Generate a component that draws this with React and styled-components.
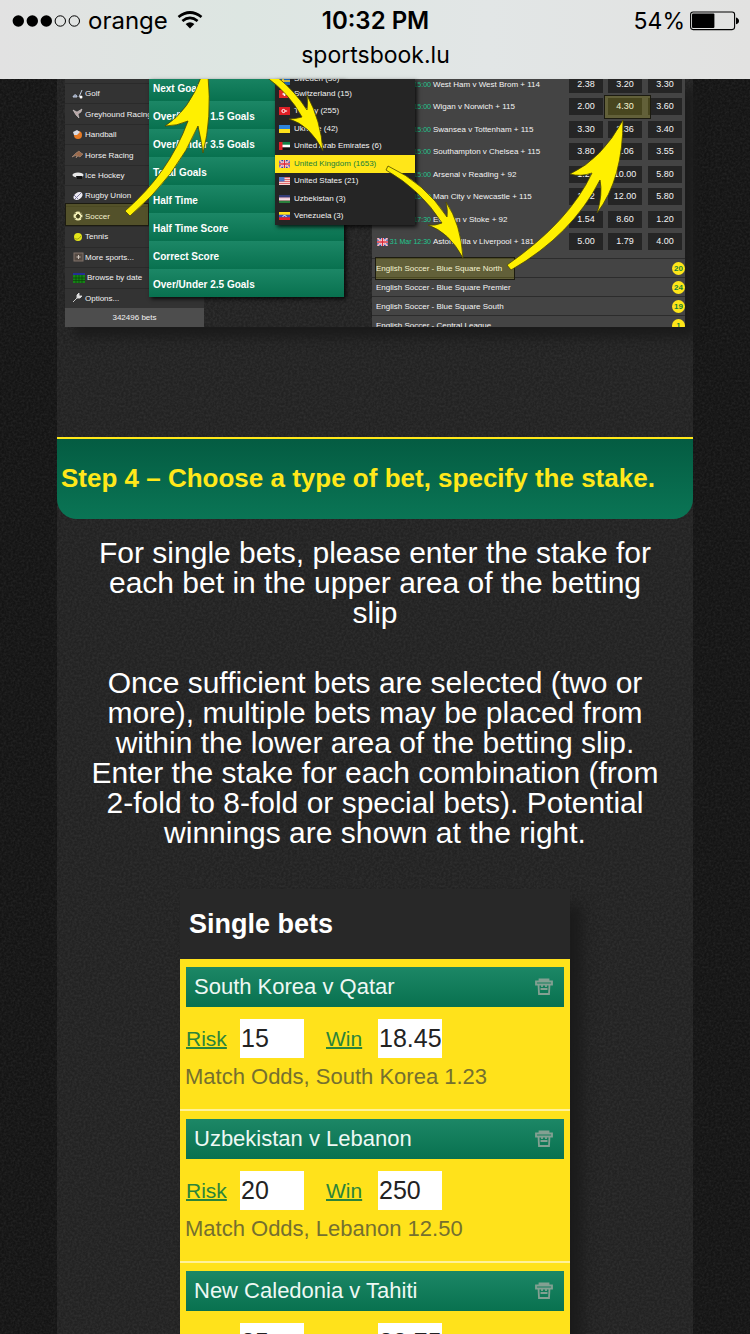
import React from "react";
import styled, { createGlobalStyle } from "styled-components";

const grain = (alpha) =>
  `url("data:image/svg+xml,%3Csvg xmlns='http://www.w3.org/2000/svg' width='160' height='160'%3E%3Cfilter id='n'%3E%3CfeTurbulence type='fractalNoise' baseFrequency='.45' numOctaves='2' stitchTiles='stitch'/%3E%3CfeColorMatrix values='0 0 0 0 0.5 0 0 0 0 0.5 0 0 0 0 0.5 ${alpha} 0 0 0 -.05'/%3E%3C/filter%3E%3Crect width='160' height='160' filter='url(%23n)'/%3E%3C/svg%3E")`;

const GlobalStyle = createGlobalStyle`
  *, *::before, *::after { box-sizing: border-box; }
  body {
    margin: 0;
    background: #151515;
    font-family: "Liberation Sans", Arial, sans-serif;
  }
  button, input { font: inherit; color: inherit; border: 0; margin: 0; }
`;

const Screen = styled.div`
  height: 100vh;
  overflow: hidden;
  background: #141414 ${grain(0.16)};
`;

/* ---------- phone chrome ---------- */

const TopChrome = styled.header`
  height: 79px;
  padding: 7px 11px 0 12px;
  color: #000;
  font-family: Inter, Roboto, sans-serif;
  font-size: 24px;
  line-height: 28px;
  background: linear-gradient(90deg, #e2e2e2, #dde6e2 32%, #e2e6e6 65%, #e2e2e1);
`;

const StatusRow = styled.div`
  display: grid;
  grid-template-columns: 1fr auto 1fr;
  align-items: center;
`;

const StatusGroup = styled.div`
  display: flex;
  align-items: center;
  justify-content: ${(p) => (p.$end ? "flex-end" : "flex-start")};
  gap: ${(p) => (p.$end ? 5 : 8)}px;
  font-size: ${(p) => (p.$end ? 23 : 24)}px;
`;

const Time = styled.span`
  font-weight: 600;
`;

const Address = styled.div`
  margin-top: 6px;
  font-size: 23px;
  text-align: center;
`;

/* ---------- page ---------- */

const Column = styled.main`
  margin: 0 57px;
  background: #222 ${grain(0.16)};
`;

const Figure = styled.figure`
  position: relative;
  display: flex;
  justify-content: space-between;
  height: 248px;
  margin: 0 8px;
  box-shadow: 10px 10px 10px #1b1b1b;
`;

const Sidebar = styled.nav`
  display: flex;
  flex-direction: column;
  width: 139px;
  padding-top: 4px;
  background: #333;
`;

const SportLink = styled.a`
  display: flex;
  flex: 1;
  align-items: center;
  gap: 1px;
  padding-left: 7px;
  border-top: 1px solid #2a2a2a;
  color: #f2f2f2;
  font-size: 8px;
  white-space: nowrap;
  text-decoration: none;
`;

const BetCount = styled.div`
  height: 19px;
  background: #4d4d4d;
  color: #f2f2f2;
  font-size: 8px;
  line-height: 19px;
  text-align: center;
`;

const Menu = styled.div`
  position: absolute;
  top: 0;
  left: ${(p) => p.$left}px;
  overflow: hidden;
  box-shadow: 2px 2px 4px rgba(0, 0, 0, 0.8);
`;

const MarketMenu = styled(Menu)`
  display: flex;
  flex-direction: column;
  justify-content: flex-end;
  width: 195px;
  height: 218px;
`;

const MarketItem = styled.a`
  flex: none;
  height: 28px;
  padding-left: 4px;
  background: linear-gradient(#1c8766, #08714f);
  color: #fff;
  font-size: 10px;
  font-weight: bold;
  line-height: 31px;
  text-decoration: none;
`;

const CountryMenu = styled(Menu)`
  display: grid;
  grid-template-rows: 6px repeat(8, 1fr);
  width: 140px;
  height: 146px;
  background: #252525;
`;

const CountryItem = styled.a`
  display: flex;
  align-items: ${(p) => (p.$cut ? "flex-end" : "center")};
  gap: 4px;
  min-height: 0;
  padding-left: 4px;
  background: ${(p) => (p.$active ? "#ffe619" : "transparent")};
  color: ${(p) => (p.$active ? "#18803a" : "#f4f4f4")};
  font-size: 8px;
  line-height: 12px;
  white-space: nowrap;
  text-decoration: none;
`;

const OddsPanel = styled.section`
  width: 313px;
  overflow: hidden;
  background: #444;
`;

const OddsTable = styled.table`
  width: 100%;
  height: 180px;
  margin: -6px 0 5px;
  border-collapse: collapse;
  table-layout: fixed;
  color: #f4f4f4;
  font-size: 8px;
  line-height: 11px;
  white-space: nowrap;

  th, td { padding: 0; font-weight: normal; text-align: left; }
`;

const Kickoff = styled.div`
  display: flex;
  align-items: center;
  justify-content: flex-end;
  gap: 2px;
  padding-right: 2px;
  color: #22c690;
  font-size: 7px;
`;

const OddsButton = styled.button`
  display: block;
  width: 34px;
  height: 17px;
  padding: 0;
  background: #252525;
  font-size: 9px;
  text-align: center;
`;

const LeagueRow = styled.a`
  display: flex;
  align-items: center;
  justify-content: space-between;
  height: 19px;
  padding-left: 4px;
  border-top: 1px solid #2c2c2c;
  color: #f4f4f4;
  font-size: 8px;
  text-decoration: none;
`;

const LeagueCount = styled.span`
  width: 13px;
  height: 13px;
  border-radius: 50%;
  background: #ffe619;
  color: #18803a;
  font-weight: bold;
  line-height: 13px;
  text-align: center;
`;

const Annotations = styled.svg`
  position: absolute;
  top: 0;
  left: 0;
  overflow: hidden;
`;

const StepTitle = styled.h2`
  height: 82px;
  margin: 110px 0 0;
  padding-left: 4px;
  border-top: 2px solid #ffe81a;
  border-radius: 0 0 20px 20px;
  background: linear-gradient(#045c42, #0a7555);
  color: #ffe81a;
  font-size: 26px;
  line-height: 78px;
  white-space: nowrap;
`;

const Copy = styled.p`
  margin: 0;
  padding: ${(p) => (p.$first ? "19px 32px 40px" : "0 32px 41px")};
  color: #fff;
  font-size: 30px;
  line-height: 30px;
  text-align: center;
`;

const Slip = styled.section`
  width: 390px;
  max-width: 100%;
  margin: 0 auto;
  background: #282828;
  box-shadow: 12px 16px 12px #1b1b1b;
`;

const SlipTitle = styled.h3`
  height: 70px;
  margin: 0;
  padding-left: 9px;
  color: #fff;
  font-size: 27px;
  line-height: 70px;
`;

const Bet = styled.article`
  height: 152px;
  padding: 8px 6px 0;
  border-bottom: 2px solid #fff29a;
  background: #ffe21b;
`;

const BetHeader = styled.header`
  display: flex;
  align-items: center;
  justify-content: space-between;
  height: 40px;
  padding: 0 10px 0 8px;
  background: linear-gradient(#1c8766, #08714f);
  color: #eef8f4;
  font-size: 22px;
`;

const RemoveButton = styled.button`
  width: 20px;
  height: 20px;
  padding: 0;
  background: none;
`;

const StakeRow = styled.div`
  display: grid;
  grid-template-columns: 54px 64px 22px 52px 64px;
  align-items: center;
  height: 38px;
  margin-top: 12px;
`;

const StakeLabel = styled.label`
  color: #2c843a;
  font-size: 21px;
  text-decoration: underline;
  text-decoration-thickness: 2px;
`;

const StakeInput = styled.input`
  width: 64px;
  height: 39px;
  padding: 0 1px;
  border-radius: 0;
  background: #fff;
  color: #222;
  font-size: 25px;
`;

const BetNote = styled.div`
  margin: 6px 0 0 -1px;
  color: #75702f;
  font-size: 22px;
  line-height: 28px;
  white-space: nowrap;
`;

/* ---------- icons ---------- */

const SignalDots = () => (
  <svg width="68" height="12" viewBox="0 0 68 12" aria-hidden="true">
    {[0, 1, 2, 3, 4].map((i) => (
      <circle key={i} cx={6.3 + i * 14} cy="6" r={i < 3 ? 5.7 : 5.2} fill={i < 3 ? "#000" : "none"} stroke="#000" strokeWidth={i < 3 ? 0 : 1} />
    ))}
  </svg>
);

const Wifi = () => (
  <svg width="28" height="20" viewBox="-1 0 28 20" fill="none" stroke="#000" strokeWidth="2.7" aria-hidden="true">
    <path d="M1.500 6Q13-3 24.500 6M5.400 10Q13 3.800 20.600 10" />
    <path d="M8.600 13Q13 9.500 17.400 13L13 17.600Z" fill="#000" stroke="none" />
  </svg>
);

const Battery = () => (
  <svg width="49" height="20" viewBox="0 0 49 20" aria-hidden="true">
    <rect x=".6" y="1" width="44" height="17.6" rx="2.5" fill="none" stroke="#000" strokeWidth="1.1" />
    <rect x="2" y="2.5" width="22.4" height="14.6" rx="1" />
    <path d="M46 6.5Q49 7.5 49 10T46 13.3Z" />
  </svg>
);

const Trash = () => (
  <svg width="20" height="20" viewBox="0 0 20 20" fill="none" stroke="#83a092" strokeWidth="1.8" aria-hidden="true">
    <path d="M5.500 4V2.500H14.500V4M2 4.500H18V7.500H15.500L15 17H5L4.500 7.500H2ZM4.500 7.500H15.500M6.500 12H13.500M8 7.500V10M12 7.500V10" />
  </svg>
);

const sportArt = {
  golf: <><path d="M1 9C2 6 5 6 5 9ZM7 9L10 2" stroke="#bfc9dc" fill="#8793ad" /><circle cx="9" cy="9" r="1.5" fill="#fff" /></>,
  greyhound: <path d="M1 2L5 4L10 1L9 4L6 6L7 10L4 7Z" fill="#b8a5a5" stroke="#e3dede" strokeWidth=".5" />,
  handball: <><circle cx="6" cy="6" r="4" fill="#e67a25" /><path d="M1 3L5 1L8 3L5 6L2 6Z" fill="#d8dbe4" /></>,
  horse: <path d="M0 8L4 4L7 2L9 4L11 5L8 8L6 7L4 9L5 6Z" fill="#9a694b" stroke="#cfb09d" strokeWidth=".4" />,
  hockey: <><ellipse cx="6" cy="5" rx="5.5" ry="2.5" fill="#e8e8e8" /><path d="M4 6H10V9H5Z" fill="#111" /></>,
  rugby: <><ellipse cx="6" cy="6" rx="5" ry="3.4" fill="#eceaf1" transform="rotate(-35 6 6)" /><path d="M3 9L9 3M2 5L6 9" stroke="#7b779c" /></>,
  soccer: <><circle cx="6" cy="6" r="4.5" fill="#f1efd9" /><path d="M6 4L8 6L7 8H5L4 6ZM2 4L4 3M8 2L10 5M2 8L4 9M9 9L10 7" fill="#222" stroke="#222" strokeWidth=".8" /></>,
  tennis: <><circle cx="6" cy="6" r="4" fill="#e4e51a" /><path d="M2 7Q6 10 9 5" fill="none" stroke="#a0a40b" /></>,
  more: <><rect x="2" y="2" width="9" height="8" fill="#554a43" stroke="#81736a" /><path d="M6.5 4V8M4.5 6H8.5" stroke="#cfc6be" /></>,
  calendar: <><rect width="12" height="10" y="1" fill="#168316" /><rect width="12" height="2" y="1" fill="#242d96" /><path d="M3 3V11M6 3V11M9 3V11M0 6H12M0 8.500H12" stroke="#0a400a" strokeWidth=".7" /></>,
  options: <path d="M1 10L5 6M5 6L5 3L7 1V4H10L8 6Z" fill="#ddd" stroke="#ddd" strokeWidth=".9" />,
};

const SportIcon = ({ name }) => (
  <svg width={name === "calendar" ? 14 : 12} height="12" viewBox="0 0 12 12" aria-hidden="true">{sportArt[name]}</svg>
);

const flagArt = {
  se: <><rect width="11" height="8" fill="#1b63b0" /><path d="M0 4H11M4 0V8" stroke="#ffd21c" strokeWidth="1.6" /></>,
  ch: <><rect width="11" height="8" fill="#dc2a2a" /><path d="M3.500 4H7.500M5.500 2V6" stroke="#fff" strokeWidth="1.5" /></>,
  tr: <><rect width="11" height="8" fill="#e01f26" /><circle cx="4.500" cy="4" r="1.600" fill="none" stroke="#fff" /><path d="M6.500 3L8.500 4L6.500 5Z" fill="#fff" /></>,
  ua: <><rect width="11" height="4" fill="#2d83dc" /><rect y="4" width="11" height="4" fill="#ffe01b" /></>,
  ae: <><rect width="11" height="8" fill="#fff" /><rect width="11" height="2.700" fill="#128145" /><rect y="5.300" width="11" height="2.700" fill="#111" /><rect width="3.500" height="8" fill="#e02027" /></>,
  gb: <><rect width="11" height="8" fill="#31479a" /><path d="M0 0L11 8M11 0L0 8" stroke="#fff" strokeWidth="1.800" /><path d="M0 0L11 8M11 0L0 8" stroke="#da2a38" strokeWidth=".6" /><path d="M0 4H11M5.500 0V8" stroke="#fff" strokeWidth="2.600" /><path d="M0 4H11M5.500 0V8" stroke="#da2a38" strokeWidth="1.400" /></>,
  us: <><rect width="11" height="8" fill="#f6d5d2" /><path d="M0 .5H11M0 2.500H11M0 4.500H11M0 6.500H11" stroke="#e0696c" /><rect width="5.500" height="4.500" fill="#4d78c8" /></>,
  uz: <><rect width="11" height="8" fill="#fff" /><rect width="11" height="2.500" fill="#343c78" /><rect y="5.500" width="11" height="2.500" fill="#2a7f3c" /><path d="M0 3H11M0 5.200H11" stroke="#c33158" strokeWidth=".5" /></>,
  ve: <><rect width="11" height="8" fill="#3451c0" /><rect width="11" height="2.700" fill="#ffe01b" /><rect y="5.300" width="11" height="2.700" fill="#e02027" /><path d="M3.500 4.500Q5.500 2.500 7.500 4.500" fill="none" stroke="#fff" /></>,
};

const Flag = ({ code }) => (
  <svg width="11" height="8" viewBox="0 0 11 8" aria-hidden="true">{flagArt[code]}</svg>
);

/* ---------- data ---------- */

const sports = [
  ["golf", "Golf"],
  ["greyhound", "Greyhound Racing"],
  ["handball", "Handball"],
  ["horse", "Horse Racing"],
  ["hockey", "Ice Hockey"],
  ["rugby", "Rugby Union"],
  ["soccer", "Soccer"],
  ["tennis", "Tennis"],
  ["more", "More sports..."],
  ["calendar", "Browse by date"],
  ["options", "Options..."],
];

const markets = [
  "Next Goal",
  "Over/Under 1.5 Goals",
  "Over/Under 3.5 Goals",
  "Total Goals",
  "Half Time",
  "Half Time Score",
  "Correct Score",
  "Over/Under 2.5 Goals",
];

const countries = [
  ["se", "Sweden (30)"],
  ["ch", "Switzerland (15)"],
  ["tr", "Turkey (255)"],
  ["ua", "Ukraine (42)"],
  ["ae", "United Arab Emirates (6)"],
  ["gb", "United Kingdom (1653)"],
  ["us", "United States (21)"],
  ["uz", "Uzbekistan (3)"],
  ["ve", "Venezuela (3)"],
];

const events = [
  ["15:00", "West Ham v West Brom + 114", ["2.38", "3.20", "3.30"]],
  ["15:00", "Wigan v Norwich + 115", ["2.00", "4.30", "3.60"]],
  ["15:00", "Swansea v Tottenham + 115", ["3.30", "2.36", "3.40"]],
  ["15:00", "Southampton v Chelsea + 115", ["3.80", "2.06", "3.55"]],
  ["15:00", "Arsenal v Reading + 92", ["1.25", "10.00", "5.80"]],
  ["15:00", "Man City v Newcastle + 115", ["1.62", "12.00", "5.80"]],
  ["17:30", "Everton v Stoke + 92", ["1.54", "8.60", "1.20"]],
  ["31 Mar 12:30", "Aston Villa v Liverpool + 181", ["5.00", "1.79", "4.00"]],
];

const leagues = [
  ["English Soccer - Blue Square North", 20],
  ["English Soccer - Blue Square Premier", 24],
  ["English Soccer - Blue Square South", 19],
  ["English Soccer - Central League", 1],
];

const bets = [
  { match: "South Korea v Qatar", risk: "15", win: "18.45", note: "Match Odds, South Korea 1.23" },
  { match: "Uzbekistan v Lebanon", risk: "20", win: "250", note: "Match Odds, Lebanon 12.50" },
  { match: "New Caledonia v Tahiti", risk: "25", win: "33.75", note: "Match Odds, Tahiti 1.35" },
];

const arrows = [
  "M60 132Q104 94 123 42Q112 47 100 47Q124 32 137-4L143-4Q147 40 138 74Q136 60 133 47Q112 97 65 137Z",
  "M200-3Q224 14 237 38Q230 40 224 40Q245 46 258 72Q256 42 242 16Q243 24 242 31Q230 12 211-3Z",
  "M321 91Q356 111 377 144Q370 147 363 146Q384 153 398 179Q396 145 381 123Q383 131 382 138Q360 104 323 87Z",
  "M442 186Q504 143 527 94Q516 98 505 95Q537 80 558 41Q558 100 532 134Q538 115 535 101Q507 156 446 191Z",
];

const spotlights = [
  [0, 124, 84, 23],
  [310, 178, 140, 23],
  [539, 16, 47, 24],
];

/* ---------- sections ---------- */

const StatusBar = () => (
  <TopChrome>
    <StatusRow>
      <StatusGroup>
        <SignalDots />
        <span>orange</span>
        <Wifi />
      </StatusGroup>
      <Time>10:32 PM</Time>
      <StatusGroup $end>
        <span>54%</span>
        <Battery />
      </StatusGroup>
    </StatusRow>
    <Address>sportsbook.lu</Address>
  </TopChrome>
);

const SportsbookFigure = () => (
  <Figure>
    <Sidebar>
      {sports.map(([icon, label]) => (
        <SportLink key={label} href="#sport">
          <SportIcon name={icon} />
          {label}
        </SportLink>
      ))}
      <BetCount>342496 bets</BetCount>
    </Sidebar>
    <OddsPanel>
      <OddsTable>
        <colgroup>
          <col style={{ width: 61 }} />
          <col />
          <col style={{ width: 39 }} />
          <col style={{ width: 40 }} />
          <col style={{ width: 37 }} />
        </colgroup>
        <tbody>
          {events.map(([time, name, odds], i) => (
            <tr key={name}>
              <td>
                <Kickoff>
                  {i > 6 && <Flag code="gb" />}
                  {time}
                </Kickoff>
              </td>
              <th scope="row">{name}</th>
              {odds.map((odd, n) => (
                <td key={n}>
                  <OddsButton type="button">{odd}</OddsButton>
                </td>
              ))}
            </tr>
          ))}
        </tbody>
      </OddsTable>
      {leagues.map(([name, count]) => (
        <LeagueRow key={name} href="#league">
          {name}
          <LeagueCount>{count}</LeagueCount>
        </LeagueRow>
      ))}
    </OddsPanel>
    <MarketMenu $left={84}>
      {markets.map((name) => (
        <MarketItem key={name} href="#market">{name}</MarketItem>
      ))}
    </MarketMenu>
    <CountryMenu $left={210}>
      {countries.map(([code, name]) => (
        <CountryItem key={code} href="#country" $active={code === "gb"} $cut={code === "se"}>
          <Flag code={code} />
          {name}
        </CountryItem>
      ))}
    </CountryMenu>
    <Annotations width="620" height="248" viewBox="0 0 620 248" aria-hidden="true">
      {spotlights.map(([x, y, w, h]) => (
        <rect key={x} x={x + 0.5} y={y + 0.5} width={w - 1} height={h - 1} fill="#fff000" fillOpacity=".16" stroke="#1c1b10" />
      ))}
      {arrows.map((d) => (
        <path key={d} d={d} fill="#fff000" stroke="#4c4703" strokeWidth=".8" />
      ))}
    </Annotations>
  </Figure>
);

const BetCard = ({ bet, index }) => (
  <Bet>
    <BetHeader>
      <span>{bet.match}</span>
      <RemoveButton type="button" aria-label="Remove bet">
        <Trash />
      </RemoveButton>
    </BetHeader>
    <StakeRow>
      <StakeLabel htmlFor={`risk-${index}`}>Risk</StakeLabel>
      <StakeInput id={`risk-${index}`} defaultValue={bet.risk} />
      <span />
      <StakeLabel htmlFor={`win-${index}`}>Win</StakeLabel>
      <StakeInput id={`win-${index}`} defaultValue={bet.win} />
    </StakeRow>
    <BetNote>{bet.note}</BetNote>
  </Bet>
);

export default function App() {
  return (
    <Screen>
      <GlobalStyle />
      <StatusBar />
      <Column>
        <SportsbookFigure />
        <StepTitle>Step 4 – Choose a type of bet, specify the stake.</StepTitle>
        <Copy $first>
          For single bets, please enter the stake for each bet in the upper area of the betting slip
        </Copy>
        <Copy>
          Once sufficient bets are selected (two or more), multiple bets may be placed from within the
          lower area of the betting slip. Enter the stake for each combination (from 2-fold to 8-fold or
          special bets). Potential winnings are shown at the right.
        </Copy>
        <Slip>
          <SlipTitle>Single bets</SlipTitle>
          {bets.map((bet, i) => (
            <BetCard key={bet.match} bet={bet} index={i} />
          ))}
        </Slip>
      </Column>
    </Screen>
  );
}
